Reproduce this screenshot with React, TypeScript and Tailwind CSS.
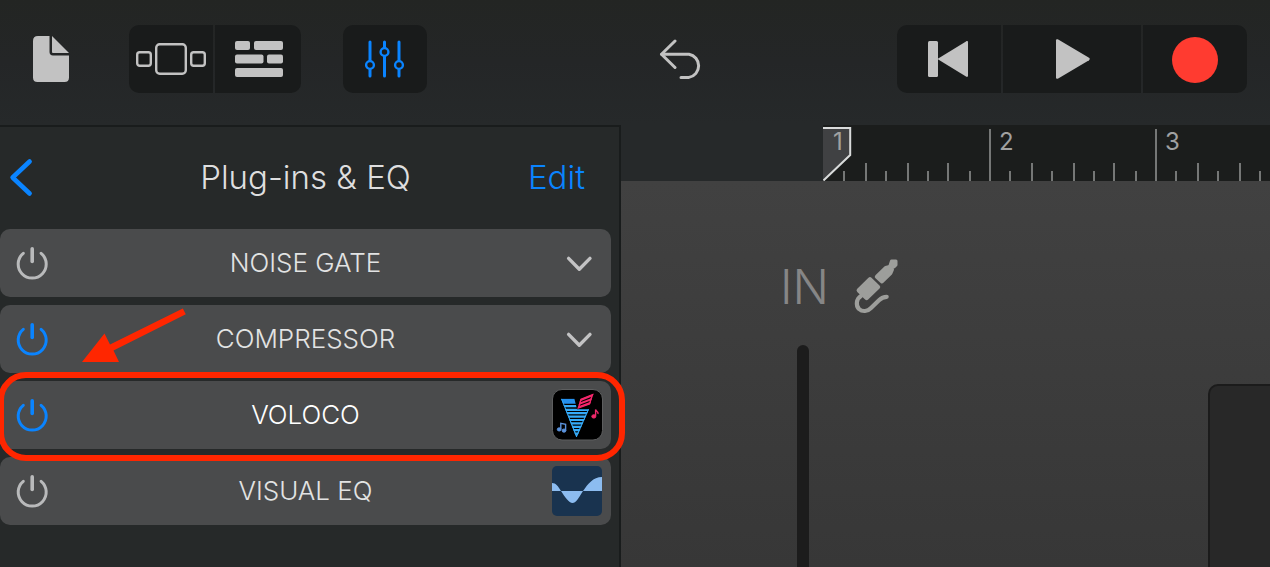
import React, { useState } from 'react';
import clsx from 'clsx';

const plugins = [
  { name: 'NOISE GATE', on: false, icon: 'chevron' },
  { name: 'COMPRESSOR', on: true, icon: 'chevron' },
  { name: 'VOLOCO', on: true, icon: 'voloco', active: true },
  { name: 'VISUAL EQ', on: false, icon: 'eq' },
];

const bars = [1, 2, 3];
const ticks = [21, 43, 63, 85, 105, 125, 147];

function PowerIcon() {
  return (
    <svg width="40" height="40" viewBox="0 0 40 40" fill="none" stroke="currentColor" strokeWidth="3" strokeLinecap="round">
      <path d="M11.3 10.3A14 14 0 1 0 29.1 10.3" />
      <path d="M20.2 5.8V18.5" strokeWidth="3.6" />
    </svg>
  );
}

function ChevronIcon() {
  return (
    <svg width="52" height="52" viewBox="0 0 52 52" fill="none" stroke="#c3c3c4" strokeWidth="3.4" strokeLinecap="round" strokeLinejoin="round">
      <path d="M17.6 21.4L28.3 32.2L39 21.4" />
    </svg>
  );
}

function VolocoIcon() {
  return (
    <svg width="52" height="52" viewBox="0 0 52 52">
      <defs>
        <clipPath id="vBlue">
          <path d="M10 9.8H23.4L26 20.2H38L25.9 48H25.1Z" />
        </clipPath>
        <clipPath id="vPink">
          <path d="M29.5 9.8L42.6 4.4L39 15.4L26.4 20Z" />
        </clipPath>
      </defs>
      <rect x="1.5" y=".5" width="50" height="50.5" rx="9.5" fill="#000" stroke="#5d5e5f" />
      <g clipPath="url(#vBlue)" stroke="#35aaf8" strokeWidth="2.2" fill="none">
        <path d="M8 11H26M8 13.4H26" stroke="#2490ee" strokeWidth="2.8" />
        <path d="M8 17.2H26M8 20.8H40M8 24.2H40M8 27.6H40M8 31H40M8 34.4H40M8 37.8H40M8 41.2H40M8 44.6H40" />
        <path d="M10 9.8L25.5 48L38 20.2" strokeWidth="1.8" />
      </g>
      <g clipPath="url(#vPink)" fill="none" stroke="#f5266b" strokeWidth="1.9">
        <path d="M26 12.6L44 5.4M25 16L44 8.8M24 19.4L44 12.2" />
        <path d="M29.5 9.8L42.6 4.4L39 15.4L26.4 20Z" strokeWidth="2.8" />
      </g>
      <g fill="#5b93dd" stroke="#5b93dd">
        <ellipse cx="8.2" cy="40.4" rx="1.9" ry="1.6" />
        <ellipse cx="13" cy="41.6" rx="1.9" ry="1.6" />
        <path d="M9.8 40V34.4L14.6 35.4V41.4" fill="none" strokeWidth="1.4" />
      </g>
      <g fill="#f0286a" stroke="#f0286a">
        <ellipse cx="42.8" cy="27.4" rx="2" ry="1.7" />
        <path d="M44.6 27V20.4C44.8 22.6 47.6 22 47 25" fill="none" strokeWidth="1.4" />
      </g>
    </svg>
  );
}

function EqIcon() {
  return (
    <svg width="52" height="52" viewBox="0 0 52 52">
      <rect x="1" y="1" width="50" height="50" rx="5" fill="#19334f" />
      <path d="M1 18C5 18 7 21 10 26H32C37 19 42 12 51 12V26H32C27 34 25 38 21.5 38C18 38 14 32 10 26H1Z" fill="#8cbcf0" />
    </svg>
  );
}

function JackIcon() {
  return (
    <svg width="48" height="58" viewBox="0 0 48 58" fill="#9d9e9b" stroke="#9d9e9b" strokeLinejoin="round">
      <path d="M38.5 3H43V7L41 9H38.5L37 7.5Z" strokeWidth="3" />
      <path d="M23.8 18.8L32.8 10L36.6 9L39 11.5L37.5 15L29 23.4Z" strokeWidth="4" />
      <path d="M17 21.4L25 29L13.6 40L5.8 32.4Z" strokeWidth="4.4" />
      <path d="M8.5 37.5C3 41 2.6 47.5 6 51C9.5 54 14.5 53.6 18 50L26 42.2C28 40.2 30.5 38.8 33.7 38.8" fill="none" strokeWidth="4.2" strokeLinecap="round" />
    </svg>
  );
}

function Toolbar() {
  return (
    <header className="flex h-[125px] shrink-0 items-start bg-linear-to-b from-[#232523] via-[#242627] to-[#26292a] pt-[25px] pr-[23px] text-[#c2c2c2]">
      <button aria-label="My songs" className="flex h-[68px] w-[102px] items-center justify-center">
        <svg width="36" height="46" viewBox="0 0 36 46" fill="currentColor">
          <path d="M5 0H16.5V16C16.5 18 17.8 19.5 20 19.5H36V41.5C36 44.5 34.5 46 31.5 46H4.5C1.5 46 0 44.5 0 41.5V5C0 1.6 1.6 0 5 0Z" />
          <path d="M19 0L36 17H20.2C19.4 17 19 16.6 19 15.8Z" />
        </svg>
      </button>

      <div className="ml-[27px] flex h-[68px] gap-[2px] overflow-hidden rounded-[10px]">
        <button aria-label="Browser" className="flex w-[84px] items-center justify-center bg-[#191b1b]">
          <svg width="72" height="34" viewBox="0 0 72 34" fill="none" stroke="currentColor" strokeWidth="2.4">
            <rect x="2.2" y="10.2" width="13.6" height="13.6" rx="2.5" />
            <rect x="21.2" y="2.2" width="29.6" height="29.6" rx="3.5" />
            <rect x="56.2" y="10.2" width="13.6" height="13.6" rx="2.5" />
          </svg>
        </button>
        <button aria-label="Tracks" className="flex w-[86px] items-center justify-center bg-[#191b1b]">
          <svg width="50" height="36" viewBox="0 0 50 36" fill="currentColor">
            <rect x="2" y="0" width="15" height="9" rx="2" />
            <rect x="21" y="0" width="29" height="9" rx="2" />
            <rect x="2" y="13.5" width="28.5" height="9" rx="2" />
            <rect x="34" y="13.5" width="16" height="9" rx="2" />
            <rect x="2" y="27" width="48" height="9" rx="2" />
          </svg>
        </button>
      </div>

      <button aria-label="Track controls" className="ml-[42px] flex h-[68px] w-[84px] items-center justify-center rounded-[10px] bg-[#191b1b] text-[#0a84ff]">
        <svg width="40" height="38" viewBox="0 0 40 38" fill="none" stroke="currentColor" strokeWidth="3" strokeLinecap="round">
          <path d="M5 2V20.5M5 29.5V36M19.5 2V7.5M19.5 16.5V36M34 2V20.5M34 29.5V36" />
          <circle cx="5" cy="25" r="3.9" strokeWidth="2.4" />
          <circle cx="19.5" cy="12" r="3.9" strokeWidth="2.4" />
          <circle cx="34" cy="25" r="3.9" strokeWidth="2.4" />
        </svg>
      </button>

      <div className="flex h-[68px] flex-1 justify-center pl-9">
        <button aria-label="Undo">
          <svg width="44" height="40" viewBox="0 0 44 40" fill="none" stroke="currentColor" strokeWidth="3" strokeLinecap="round" strokeLinejoin="round">
            <path d="M17 2L3.5 15.2L17 28.5" />
            <path d="M3.8 15.2H31A11.8 11.8 0 0 1 31 38.4H23" />
          </svg>
        </button>
      </div>

      <div className="flex h-[68px] gap-[2px] overflow-hidden rounded-[10px]">
        <button aria-label="Go to beginning" className="flex w-[104px] items-center justify-center bg-[#191b1b]">
          <svg width="42" height="36" viewBox="0 0 42 36" fill="currentColor">
            <rect x="0" y="0" width="10" height="36" rx="1.5" />
            <path d="M9.4 18L38 .4C39.2 -.2 40 .2 40 1.4V34.6C40 35.8 39.2 36.2 38 35.6Z" />
          </svg>
        </button>
        <button aria-label="Play" className="flex w-[138px] items-center justify-center bg-[#191b1b]">
          <svg width="36" height="40" viewBox="0 0 36 40" fill="currentColor">
            <path d="M2 1.6C2 .4 3 0 4.2 .6L35 18.8C36 19.5 36 20.5 35 21.2L4.2 39.4C3 40 2 39.6 2 38.4Z" />
          </svg>
        </button>
        <button aria-label="Record" className="flex w-[104px] items-center justify-center bg-[#191b1b] pt-px">
          <span className="size-[46px] rounded-full bg-[#ff3b30]" />
        </button>
      </div>
    </header>
  );
}

function Ruler() {
  return (
    <div className="flex h-14 shrink-0 bg-[#26292a]">
      <div className="relative ml-[202px] flex flex-1 overflow-hidden bg-[#1b1d1c]">
        <svg className="absolute top-0 left-0" width="32" height="56" viewBox="0 0 32 56">
          <path d="M0 3H27V30L0 56Z" fill="#404143" />
          <path d="M0 3H27.2V30L0.5 55.5" fill="none" stroke="#d9dbdb" strokeWidth="2" />
        </svg>
        {bars.map((bar) => (
          <div key={bar} className="relative w-[166px] shrink-0 pl-[10px]">
            <svg className="absolute bottom-0 left-0" width="166" height="52" viewBox="0 0 166 52" stroke="#757776" strokeWidth="2">
              {bar > 1 && <path d="M1 0V52" />}
              {ticks.map((x, i) => (
                <path key={x} d={`M${x} ${i % 2 ? 34 : 42}V52`} />
              ))}
            </svg>
            <span className="relative text-2xl leading-[34px] text-[#a0a1a1]">{bar}</span>
          </div>
        ))}
      </div>
    </div>
  );
}

export default function App() {
  const [power, setPower] = useState(plugins.map((p) => p.on));

  const toggle = (index: number) => {
    setPower(power.map((on, i) => (i === index ? !on : on)));
  };

  return (
    <div className="flex h-screen flex-col overflow-hidden bg-[#26292a] font-['Inter',sans-serif]">
      <Toolbar />

      <div className="flex min-h-0 flex-1">
        {/* Plug-ins panel */}
        <section className="w-[621px] shrink-0 border-t-2 border-r-2 border-[#191c1c] bg-[#262929] pr-2">
          <div className="grid h-[102px] grid-cols-[1fr_auto_1fr] items-center text-[33px] font-light">
            <button aria-label="Back" className="justify-self-start pl-2 text-[#0a84ff]">
              <svg width="28" height="40" viewBox="0 0 28 40" fill="none" stroke="currentColor" strokeWidth="4.6" strokeLinecap="round" strokeLinejoin="round">
                <path d="M21.6 3.5L4.6 19.5L21.6 35.5" />
              </svg>
            </button>
            <h1 className="text-[#dededf]">Plug-ins &amp; EQ</h1>
            <button className="justify-self-end pr-[26px] text-[#0a84ff]">Edit</button>
          </div>

          <ul className="flex flex-col gap-2">
            {plugins.map((plugin, index) => (
              <li key={plugin.name} className="relative grid h-[68px] grid-cols-[64px_1fr_64px] items-center rounded-[10px] bg-[#4a4b4c]">
                <button
                  aria-label={`${plugin.name} power`}
                  onClick={() => toggle(index)}
                  className={clsx('flex justify-center', power[index] ? 'text-[#0a84ff]' : 'text-[#b9babb]')}
                >
                  <PowerIcon />
                </button>
                <span className={clsx('pb-0.5 text-center text-[26px] font-light', plugin.active ? 'text-white' : 'text-[#e2e3e3]')}>
                  {plugin.name}
                </span>
                <button aria-label={`Open ${plugin.name}`} className="flex justify-end pr-2">
                  {plugin.icon === 'chevron' && <ChevronIcon />}
                  {plugin.icon === 'voloco' && <VolocoIcon />}
                  {plugin.icon === 'eq' && <EqIcon />}
                </button>

                {/* Callout */}
                {plugin.active && (
                  <>
                    <div className="pointer-events-none absolute -top-[9px] -right-[14px] -bottom-3 -left-[2px] z-10 rounded-[28px] border-[6px] border-[#ff2600]" />
                    <svg className="pointer-events-none absolute -top-[73px] left-20 z-10" width="110" height="58" viewBox="0 0 110 58" fill="#ff2600">
                      <path d="M102.8 .5L105.8 6.3L33.5 42.5L39 54H2L24.5 25.5L30 36.5Z" />
                    </svg>
                  </>
                )}
              </li>
            ))}
          </ul>
        </section>

        <div className="flex min-w-0 flex-1 flex-col">
          <Ruler />

          {/* Input channel */}
          <div className="flex flex-1 justify-between bg-linear-to-b from-[#414141] to-[#373737] pl-[159px]">
            <div className="flex flex-col pt-[77px]">
              <div className="flex h-[58px] items-center gap-6">
                <span className="text-5xl font-light text-[#868686]">IN</span>
                <JackIcon />
              </div>
              <div className="mt-[29px] ml-[17px] w-3 flex-1 rounded-t-md bg-[#1c1c1c]" />
            </div>
            <div className="mt-[203px] w-[62px] rounded-tl-[10px] border-t-2 border-l-2 border-[#1b1b1b] bg-[#282828]" />
          </div>
        </div>
      </div>
    </div>
  );
}
